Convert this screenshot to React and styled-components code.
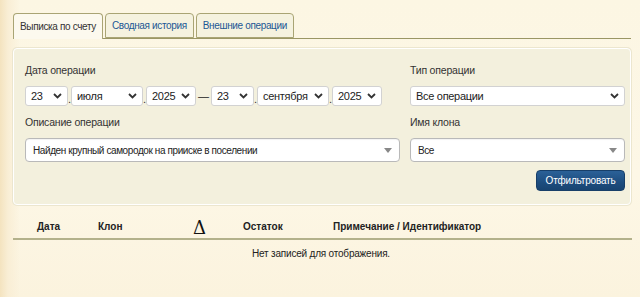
import React from "react";
import styled, { createGlobalStyle } from "styled-components";

const FONT = `"Liberation Sans", Arial, sans-serif`;

const Global = createGlobalStyle`
  html, body { margin: 0; padding: 0; }
  body {
    width: 640px;
    height: 297px;
    overflow: hidden;
    font-family: ${FONT};
    font-size: 10px;
    color: #333;
    background:
      linear-gradient(90deg, #f4e3bf 0px, #f9eed5 8px, rgba(252,247,232,0) 20px),
      linear-gradient(180deg, #fcf6e3 0%, #fdf7e6 60%, #fbf3de 100%);
  }
`;

const Page = styled.div`
  padding: 13px 9px 0 13px;
`;

const Tabs = styled.div`
  display: flex;
  gap: 2px;
  height: 26px;
  border-bottom: 1px solid #9a9664;
  box-sizing: border-box;
`;

const Tab = styled.div`
  display: flex;
  align-items: center;
  padding: 0 6px;
  height: ${(p) => (p.$active ? "26px" : "25px")};
  box-sizing: border-box;
  border: 1px solid #a9a474;
  border-bottom: ${(p) => (p.$active ? "none" : "1px solid #a9a474")};
  border-radius: 4px 4px 0 0;
  background: ${(p) => (p.$active ? "#fcf9ee" : "#f5f2df")};
  color: ${(p) => (p.$active ? "#333" : "#1c5794")};
  font-size: 10px;
  letter-spacing: -0.35px;
  white-space: nowrap;
`;

const Panel = styled.div`
  margin-top: 9px;
  background: #f3f0dd;
  border: 1px solid #ffffff;
  border-radius: 4px;
  box-shadow: 0 0 0 1px #ece6cf;
  padding: 14px 5px 13px 11px;
  display: grid;
  grid-template-columns: 375px 215px;
  column-gap: 10px;
`;

const Field = styled.div`
  display: flex;
  flex-direction: column;
  gap: ${(p) => p.$gap}px;
  margin-bottom: ${(p) => p.$mb || 0}px;
`;

const Label = styled.div`
  font-size: 10.5px;
  letter-spacing: -0.2px;
  color: #333;
  height: 14px;
  line-height: 14px;
`;

const Select = styled.div`
  display: flex;
  align-items: center;
  justify-content: space-between;
  box-sizing: border-box;
  width: ${(p) => (p.$w ? p.$w + "px" : "100%")};
  height: ${(p) => p.$h || 20}px;
  padding: 0 ${(p) => p.$pr || 4}px 0 ${(p) => p.$pl || 4}px;
  background: #fff;
  border: 1px solid ${(p) => (p.$chosen ? "#b9b9b9" : "#d2d2d2")};
  border-radius: ${(p) => (p.$chosen ? 4 : 3)}px;
  font-size: ${(p) => (p.$chosen ? 10 : 11)}px;
  letter-spacing: ${(p) => (p.$chosen ? -0.4 : -0.3)}px;
  color: #222;
  white-space: nowrap;
  box-shadow: ${(p) => (p.$chosen ? "inset 0 1px 1px rgba(0,0,0,0.05)" : "none")};
`;

const DateRow = styled.div`
  display: flex;
  align-items: center;
`;

const Dot = styled.span`
  width: 3px;
  text-align: center;
  align-self: flex-end;
  line-height: 14px;
  font-size: 11px;
  color: #333;
`;

const Dash = styled.span`
  width: 15px;
  text-align: center;
  font-size: 11px;
  color: #222;
`;

const ButtonRow = styled.div`
  grid-column: 2;
  display: flex;
  justify-content: flex-end;
  margin-top: 8px;
`;

const Button = styled.button`
  height: 21px;
  width: 89px;
  padding: 0;
  border: 1px solid #173f69;
  border-radius: 4px;
  background: linear-gradient(180deg, #2b6198 0%, #1d4d7f 60%, #184471 100%);
  color: #fff;
  font-family: ${FONT};
  font-size: 10px;
  letter-spacing: -0.2px;
  cursor: pointer;
`;

const Table = styled.div`
  margin-top: 7px;
  margin-right: -1px;
`;

const HeadRow = styled.div`
  display: grid;
  grid-template-columns: 85px 95px 50px 90px 1fr;
  align-items: center;
  box-sizing: border-box;
  height: 28px;
  padding-top: 3px;
  border-bottom: 2px solid #b3b18b;
  font-weight: bold;
  font-size: 10px;
  color: #222;
`;

const HeadCell = styled.div`
  padding-left: ${(p) => p.$pl || 0}px;
`;

const Delta = styled.div`
  font-family: "DejaVu Serif", "Liberation Serif", serif;
  font-size: 18px;
  font-weight: normal;
  color: #111;
  line-height: 18px;
  padding-top: 3px;
`;

const Empty = styled.div`
  text-align: center;
  padding-top: 7px;
  line-height: 13px;
  font-size: 10px;
  letter-spacing: -0.2px;
  color: #222;
  padding-right: 3px;
`;

const Chevron = () => (
  <svg width="9" height="6" viewBox="0 0 9 6">
    <path d="M1 1 L4.5 4.5 L8 1" fill="none" stroke="#333" strokeWidth="1.8" />
  </svg>
);

const Tri = () => (
  <svg width="8" height="5" viewBox="0 0 8 5">
    <path d="M0 0 L8 0 L4 5 Z" fill="#888" />
  </svg>
);

const DateSelect = ({ w, value }) => (
  <Select $w={w} $pl={5} $pr={5}>
    <span>{value}</span>
    <Chevron />
  </Select>
);

export default function App() {
  return (
    <>
      <Global />
      <Page>
        <Tabs>
          <Tab $active>Выписка по счету</Tab>
          <Tab>Сводная история</Tab>
          <Tab>Внешние операции</Tab>
        </Tabs>
        <Panel>
          <Field $gap={9} $mb={9}>
            <Label>Дата операции</Label>
            <DateRow>
              <DateSelect w={43} value="23" />
              <Dot>.</Dot>
              <DateSelect w={72} value="июля" />
              <Dot>.</Dot>
              <DateSelect w={50} value="2025" />
              <Dash>—</Dash>
              <DateSelect w={43} value="23" />
              <Dot>.</Dot>
              <DateSelect w={72} value="сентября" />
              <Dot>.</Dot>
              <DateSelect w={50} value="2025" />
            </DateRow>
          </Field>
          <Field $gap={9} $mb={9}>
            <Label>Тип операции</Label>
            <Select $pl={5} $pr={5}>
              <span>Все операции</span>
              <Chevron />
            </Select>
          </Field>
          <Field $gap={9}>
            <Label>Описание операции</Label>
            <Select $chosen $h={24} $pl={7} $pr={7}>
              <span>Найден крупный самородок на прииске в поселении</span>
              <Tri />
            </Select>
          </Field>
          <Field $gap={9}>
            <Label>Имя клона</Label>
            <Select $chosen $h={24} $pl={7} $pr={7}>
              <span>Все</span>
              <Tri />
            </Select>
          </Field>
          <ButtonRow>
            <Button>Отфильтровать</Button>
          </ButtonRow>
        </Panel>
        <Table>
          <HeadRow>
            <HeadCell $pl={24}>Дата</HeadCell>
            <HeadCell>Клон</HeadCell>
            <Delta>Δ</Delta>
            <HeadCell>Остаток</HeadCell>
            <HeadCell>Примечание / Идентификатор</HeadCell>
          </HeadRow>
          <Empty>Нет записей для отображения.</Empty>
        </Table>
      </Page>
    </>
  );
}
